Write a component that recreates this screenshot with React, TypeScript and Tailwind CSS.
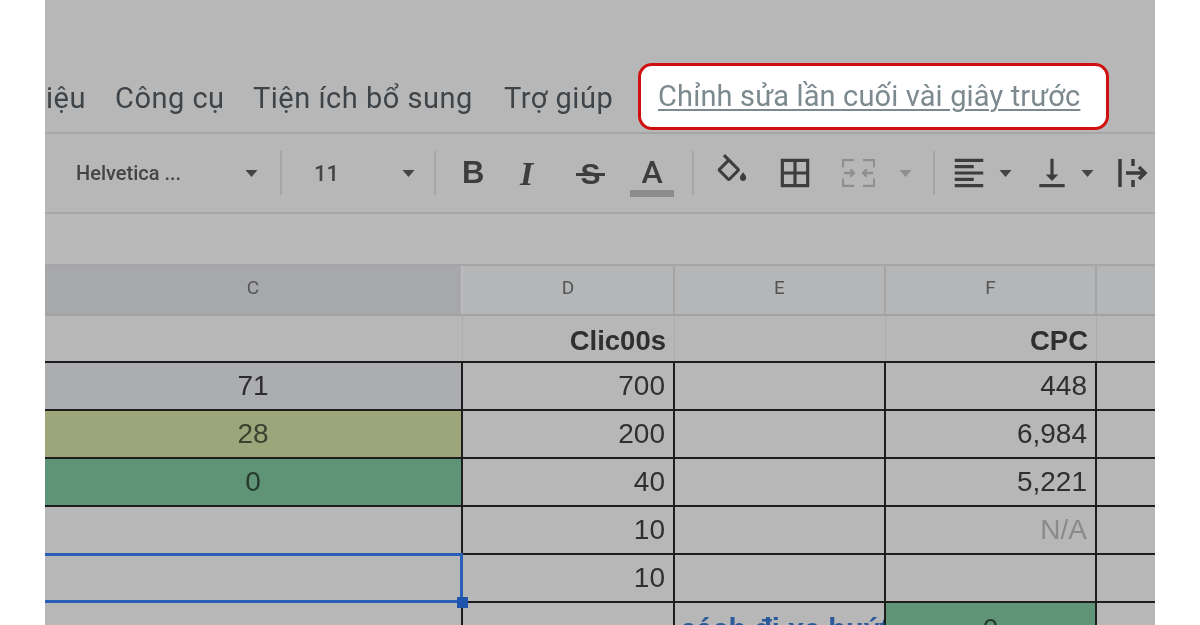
const Caret = ({ className = "" }: { className?: string }) => (
  <svg viewBox="0 0 12 7" className={`w-[13px] h-[7px] shrink-0 ${className}`}>
    <path d="M0 0h12L6 7z" fill="currentColor" />
  </svg>
);

const Sep = ({ className = "" }: { className?: string }) => (
  <div className={`w-[2px] h-[44px] bg-[#a5a5a5] shrink-0 ${className}`} />
);

const Icon = ({ d, className = "" }: { d: string; className?: string }) => (
  <svg viewBox="0 0 24 24" className={`shrink-0 text-[#3d3d3d] ${className}`}>
    <path d={d} fill="currentColor" />
  </svg>
);

const Bold = "font-['Liberation_Sans',Arial,sans-serif]";

const rows = [
  { c: "71", d: "700", f: "448", bg: "bg-[#abadb1]", text: "text-[#2c2c2c]" },
  { c: "28", d: "200", f: "6,984", bg: "bg-[#9ca67a]", text: "text-[#3a4230]" },
  { c: "0", d: "40", f: "5,221", bg: "bg-[#5f9576]", text: "text-[#263a2e]" },
  { c: "", d: "10", f: "N/A", bg: "", text: "" },
];

const colGrid = "grid grid-cols-[418px_212px_211px_211px_1fr]";
const cellLine = "border-r-2 border-b-2 border-[#1d1d1d]";

export default function App() {
  return (
    <div className="w-[1200px] h-[625px] bg-white flex justify-center overflow-hidden font-['Roboto',sans-serif]">
      <div className="w-[1110px] h-[625px] bg-[#b7b7b7] flex flex-col overflow-hidden blur-[0.5px]">
        {/* menu */}
        <div className="h-[134px] shrink-0 border-b-2 border-[#a6a6a6] flex items-end pb-[1px]">
          <div className="flex items-center h-[69px] text-[29px] tracking-[0.5px] leading-none text-[#3f4448] w-full">
            <span className="w-[40px] ml-[1px] pt-[4px] overflow-hidden whitespace-nowrap">iệu</span>
            <span className="ml-[29px] w-[110px] pt-[4px] whitespace-nowrap">Công cụ</span>
            <span className="ml-[28px] w-[219px] pt-[4px] whitespace-nowrap">Tiện ích bổ sung</span>
            <span className="ml-[32px] w-[108px] pt-[4px] whitespace-nowrap">Trợ giúp</span>
            <div className="ml-[26px] w-[471px] h-[67px] bg-white border-[3px] border-[#d01010] rounded-[14px] flex items-center pl-[17px]">
              <span className="text-[29px] tracking-[0.14px] underline decoration-[2px] underline-offset-[3px] text-[#7c8a90] whitespace-nowrap">
                Chỉnh sửa lần cuối vài giây trước
              </span>
            </div>
          </div>
        </div>
        {/* toolbar */}
        <div className="h-[80px] shrink-0 border-b-2 border-[#a6a6a6] flex items-center">
          <span className="ml-[31px] w-[106px] text-[20px] font-medium text-[#444] whitespace-nowrap">Helvetica ...</span>
          <Caret className="ml-[63px] text-[#444]" />
          <Sep className="ml-[22px]" />
          <span className="ml-[32px] w-[30px] text-[22px] font-medium text-[#444]">11</span>
          <Caret className="ml-[58px] text-[#444]" />
          <Sep className="ml-[19px]" />
          <span className={`ml-[26px] w-[22px] text-[31px] font-bold text-[#3d3d3d] ${Bold}`}>B</span>
          <span className="ml-[36px] w-[23px] text-[34px] font-bold italic text-[#3d3d3d] font-['Liberation_Serif',serif]">I</span>
          <span className={`ml-[33px] w-[29px] relative text-[30px] font-bold text-center text-[#3d3d3d] ${Bold}`}>
            S
            <span className="absolute left-0 right-0 top-[50%] h-[3px] bg-[#3d3d3d]" />
          </span>
          <div className="ml-[25px] w-[44px] pt-[4px] flex flex-col items-center">
            <span className="text-[32px] leading-[36px] font-medium text-[#3d3d3d]">A</span>
            <span className="w-[44px] h-[7px] bg-[#8c8c8c]" />
          </div>
          <Sep className="ml-[18px]" />
          <Icon className="ml-[19px] w-[38px] h-[38px]" d="M16.56 8.94L7.62 0 6.21 1.41l2.38 2.38-5.15 5.15c-.59.59-.59 1.54 0 2.12l5.5 5.5c.29.29.68.44 1.06.44s.77-.15 1.06-.44l5.5-5.5c.59-.58.59-1.53 0-2.12zM5.21 10L10 5.21 14.79 10H5.21zM19 11.5s-2 2.17-2 3.5c0 1.1.9 2 2 2s2-.9 2-2c0-1.33-2-3.5-2-3.5zM5 10h10l-5 5z" />
          <Icon className="ml-[25px] w-[38px] h-[38px]" d="M3 3v18h18V3H3zm8 16H5v-6h6v6zm0-8H5V5h6v6zm8 8h-6v-6h6v6zm0-8h-6V5h6v6z" />
          <svg viewBox="0 0 36 30" className="ml-[28px] w-[33px] h-[30px] shrink-0 text-[#8f8f8f]">
            <path d="M1 9V1h12M23 1h12v8M1 21v8h12M23 29h12v-8" fill="none" stroke="currentColor" strokeWidth="2.5" />
            <path d="M2 15h11M9 11l4 4-4 4M34 15H23M27 11l-4 4 4 4" fill="none" stroke="currentColor" strokeWidth="2.5" />
          </svg>
          <Caret className="ml-[24px] text-[#8f8f8f]" />
          <Sep className="ml-[21px]" />
          <Icon className="ml-[15px] w-[38px] h-[38px]" d="M15 15H3v2h12v-2zm0-8H3v2h12V7zM3 13h18v-2H3v2zm0 8h18v-2H3v2zM3 3v2h18V3H3z" />
          <Caret className="ml-[11px] text-[#444]" />
          <Icon className="ml-[21px] w-[38px] h-[38px]" d="M16 13h-3V3h-2v10H8l4 4 4-4zM4 19v2h16v-2H4z" />
          <Caret className="ml-[10px] text-[#444]" />
          <svg viewBox="0 0 30 32" className="ml-[24px] w-[30px] h-[32px] shrink-0 text-[#3d3d3d]">
            <path d="M2 2v28" stroke="currentColor" strokeWidth="3.5" fill="none" />
            <path d="M15 2v7M15 23v7" stroke="currentColor" strokeWidth="3.5" fill="none" />
            <path d="M8 16h19M21 10l6 6-6 6" stroke="currentColor" strokeWidth="3.5" fill="none" />
          </svg>
        </div>
        {/* formula bar */}
        <div className="h-[52px] shrink-0 border-b-2 border-[#a6a6a6] bg-[#b9b9b9]" />
        {/* column headers */}
        <div className={`${colGrid} h-[50px] shrink-0 border-b-2 border-[#a2a2a2] text-[19px] text-[#555] bg-[#b4b6b8]`}>
          <div className="bg-[#a6a8ab] flex items-center justify-center pb-[4px] border-r-2 border-[#bdbdbd]">C</div>
          {["D", "E", "F"].map((h) => (
            <div key={h} className="flex items-center justify-center pb-[4px] border-r-2 border-[#a5a5a5]">
              {h}
            </div>
          ))}
          <div />
        </div>
        {/* table */}
        <div className={`${Bold} text-[28px] leading-none text-[#2f2f2f]`}>
          <div className={`${colGrid} h-[47px] border-b-2 border-[#1d1d1d] font-bold text-[27.5px]`}>
            <div className="border-r border-[#adadad]" />
            <div className="border-r border-[#adadad] flex items-center justify-end pr-[8px] pt-[4px]">Clic00s</div>
            <div className="border-r border-[#adadad]" />
            <div className="border-r border-[#adadad] flex items-center justify-end pr-[8px] pt-[4px]">CPC</div>
            <div />
          </div>
          {rows.map((r) => (
            <div key={r.d + r.f} className={`${colGrid} h-[48px]`}>
              <div className={`${cellLine} ${r.bg} ${r.text} flex items-center justify-center`}>{r.c}</div>
              <div className={`${cellLine} flex items-center justify-end pr-[8px]`}>{r.d}</div>
              <div className={cellLine} />
              <div className={`${cellLine} flex items-center justify-end pr-[8px] ${r.f === "N/A" ? "text-[#8a8a8a]" : ""}`}>{r.f}</div>
              <div className="border-b-2 border-[#1d1d1d]" />
            </div>
          ))}
          <div className={`${colGrid} h-[48px]`}>
            <div className={`${cellLine} relative`}>
              <div className="absolute left-0 right-[-2px] top-[-2px] bottom-[-2px] border-[3px] border-l-0 border-[#2a5fb8]" />
              <div className="absolute right-[-7px] bottom-[-7px] w-[11px] h-[11px] bg-[#1f55ab]" />
            </div>
            <div className={`${cellLine} flex items-center justify-end pr-[8px]`}>10</div>
            <div className={cellLine} />
            <div className={cellLine} />
            <div className="border-b-2 border-[#1d1d1d]" />
          </div>
          <div className={`${colGrid} h-[48px]`}>
            <div className="border-r-2 border-[#1d1d1d]" />
            <div className="border-r-2 border-[#1d1d1d]" />
            <div className="border-r-2 border-[#1d1d1d] overflow-hidden whitespace-nowrap pl-[5px] pt-[12px] font-bold text-[29px] text-[#2b5a9a]">cách đi xe buýt</div>
            <div className="border-r-2 border-[#1d1d1d] bg-[#5f9576] text-[#263a2e] text-center pt-[12px]">0</div>
            <div />
          </div>
        </div>
      </div>
    </div>
  );
}
